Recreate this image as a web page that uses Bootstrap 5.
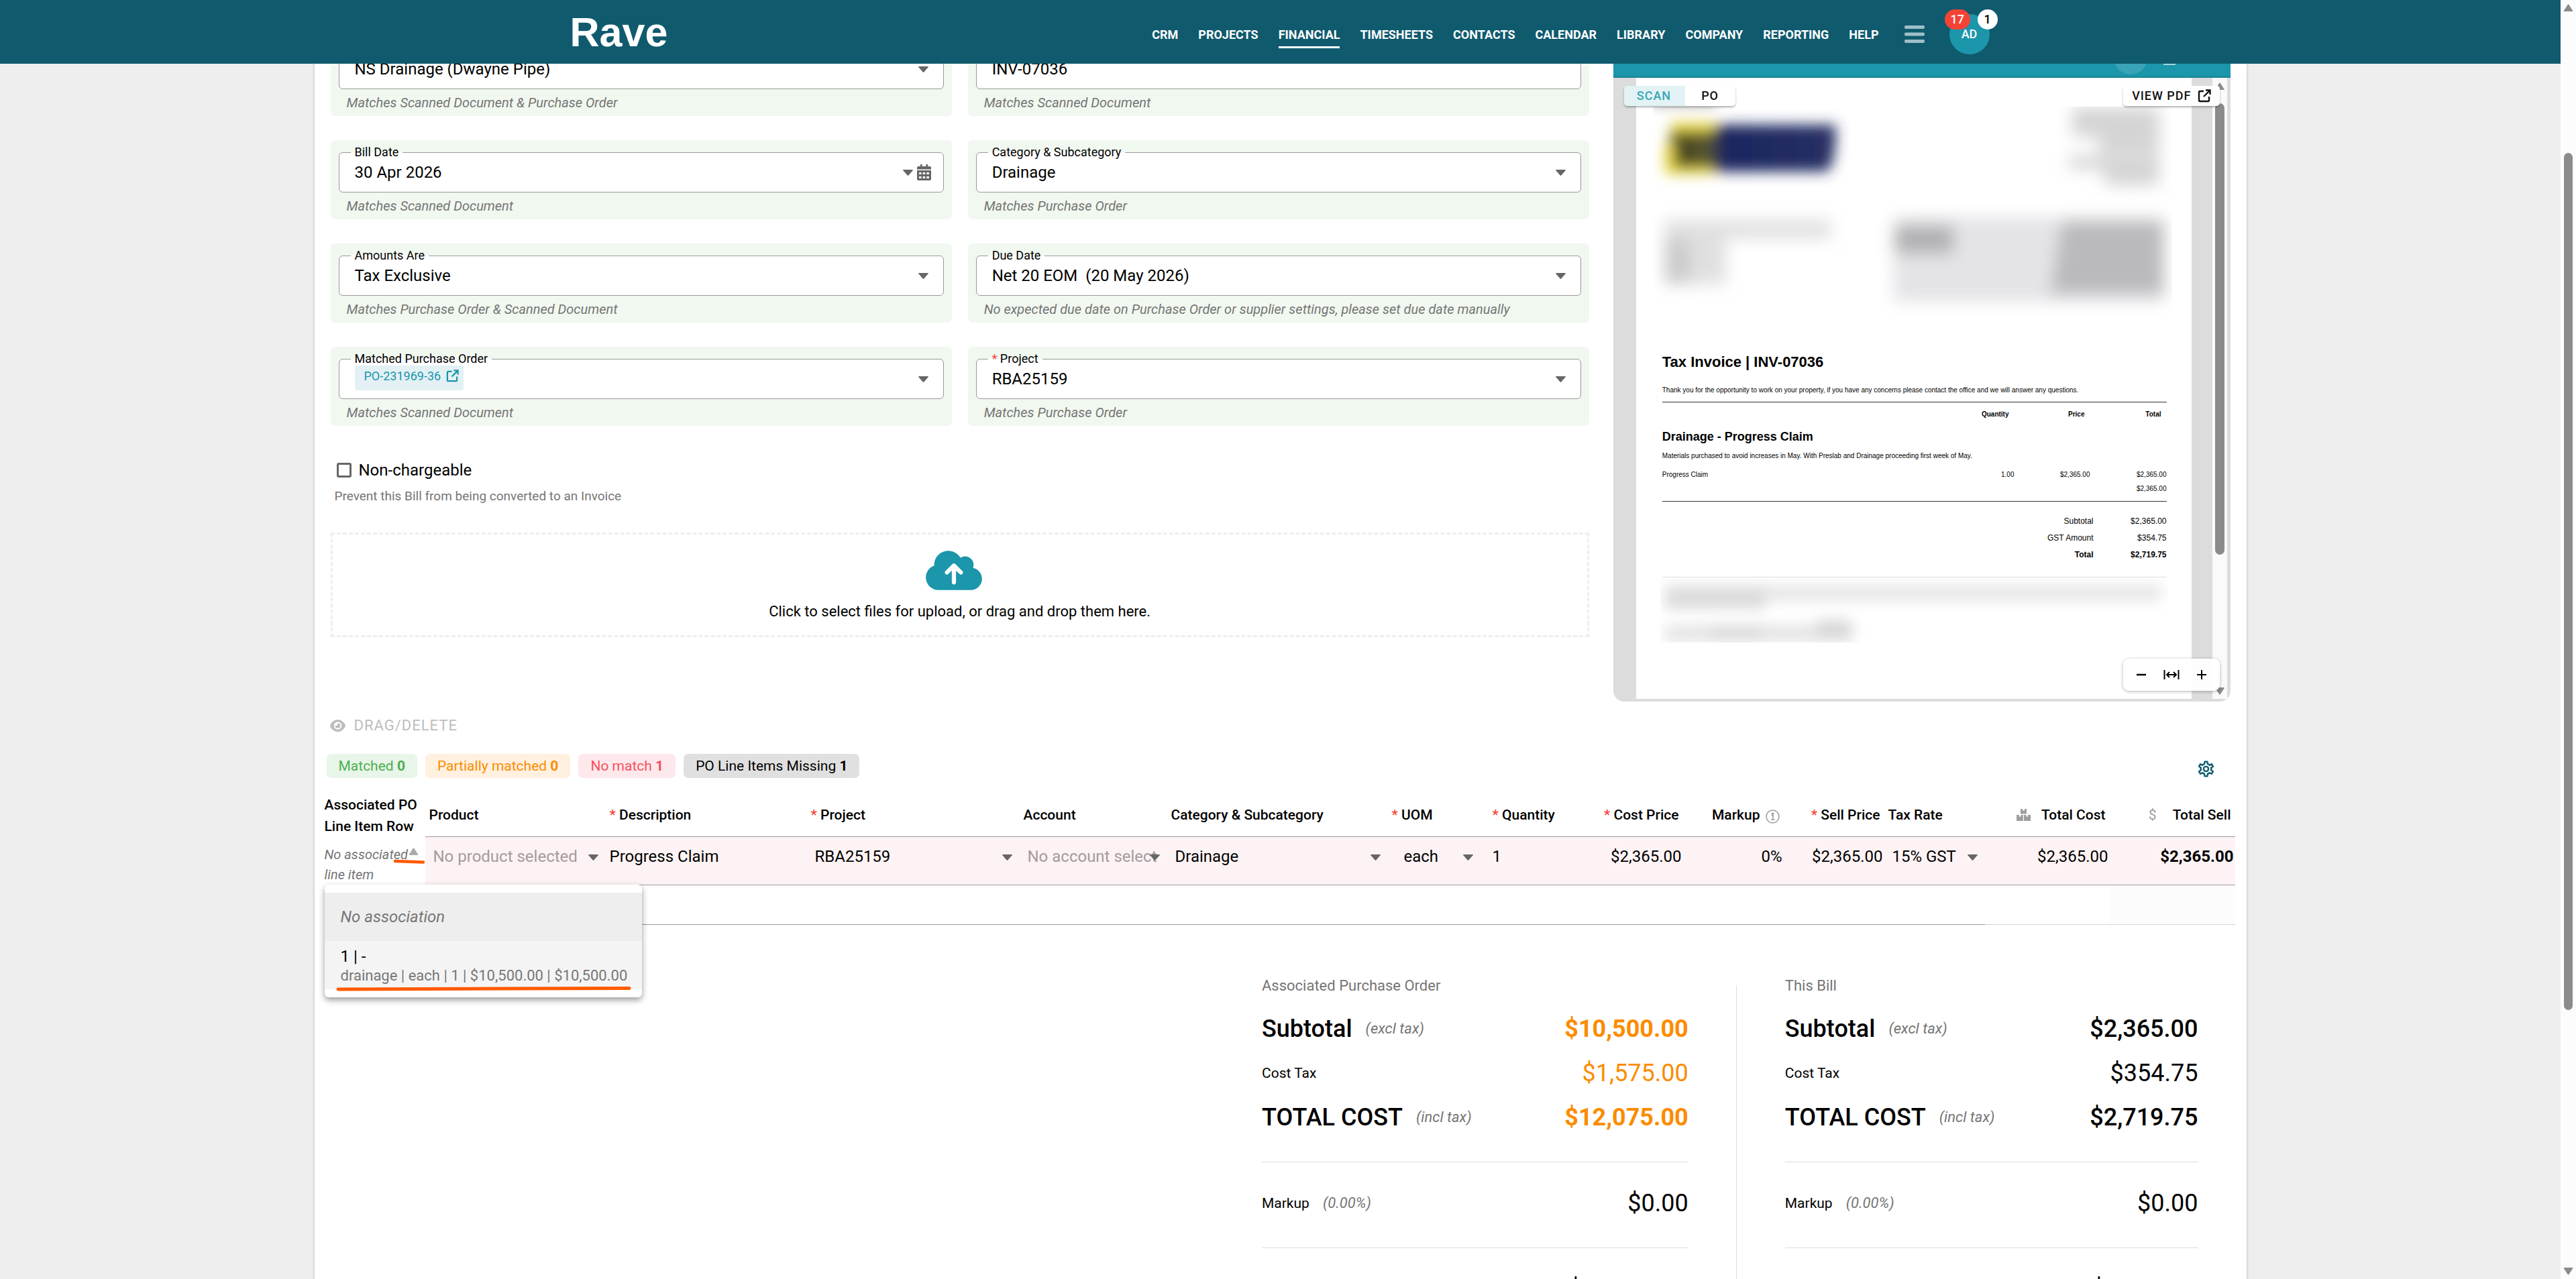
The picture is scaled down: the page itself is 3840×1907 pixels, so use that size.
<!DOCTYPE html>
<html lang="en">
<head>
<meta charset="utf-8">
<meta name="viewport" content="width=device-width, initial-scale=1">
<title>Rave - Bill INV-07036</title>
<link rel="stylesheet" href="https://cdn.jsdelivr.net/npm/bootstrap@5.3.0/dist/css/bootstrap.min.css">
<style>
:root{--nav:#105a6e;--teal:#1b96ab;--muted:#757575;--orange:#fb8c00;--line:#999}
body{font-family:Roboto,sans-serif;font-size:24px;line-height:32px;color:#000;background:#eee}
svg{display:block;flex:none}
button{color:inherit}

/* top bar */
.topbar{background:var(--nav);height:95px;z-index:10;position:relative}
.topbar-inner{max-width:2118px;width:100%;height:95px}
.brand{font-family:"Liberation Sans",sans-serif;font-weight:700;font-size:61px;line-height:64px;color:#fff;text-decoration:none}
.main-menu{gap:30px}
.main-menu a{color:#fff;font-size:18px;font-weight:700;line-height:24px;padding:16px 0 5px;text-decoration:none;border-bottom:3px solid transparent}
.main-menu a.active{border-color:#fff}
.burger{color:#a0bec7;border:0;background:none;padding:6px 0 0;margin:0 37px 0 38px}
.avatar{width:60px;height:60px;border-radius:50%;background:var(--teal);color:#fff;border:0;font-size:18px;font-weight:500;padding:0;position:relative;margin:6px 2px 0 0}
.count{position:absolute;top:-7px;height:30px;border-radius:15px;font-size:18px;line-height:30px;padding:0 9px;color:#fff;background:#f44336;left:-7px}
.count-plain{left:42px;background:#fff;color:#000;padding:0 10px}

/* page frame */
.shell{overflow:hidden}
.sheet{max-width:2880px;width:100%;background:#fff;margin:-40px auto 0;box-shadow:0 1px 4px rgba(0,0,0,.25)}
.form-area{padding:0 24px;gap:36px}
.form-left{flex:51 1 0;min-width:0}
.form-right{flex:25 1 0;min-width:0}
.field-grid{display:grid;grid-template-columns:1fr 1fr;gap:36px 24px}
.match-box{background:#f1f8f0;border-radius:6px;padding:18px 12px 0}
.outlined{position:relative;display:flex;align-items:center}
.outlined label{position:absolute;left:18px;top:-10px;padding:0 6px;font-size:18px;line-height:20px;background:linear-gradient(#f1f8f0 50%,#fff 50%)}
.outlined .ctl{width:100%;height:60px;border:1px solid #999;border-radius:6px;background:#fff;padding:0 60px 0 23px;font-size:24px;color:#000;appearance:none}
.outlined .caret{position:absolute;right:23px}
.outlined .date-tools{position:absolute;right:19px;gap:6px}
.hint{font-size:20px;line-height:40px;font-style:italic;color:var(--muted);padding-left:12px}
.req{color:#f44336}
.caret{width:15px;height:9px;color:#666;pointer-events:none}
.po-chip{position:absolute;left:24px;top:8px;height:39px;background:#e3f1f5;border-radius:4px;color:var(--teal);font-size:18px;line-height:36px;padding:0 7px 4px 14px;gap:8px;text-decoration:none}
.check-row{margin-top:50px;padding-left:9px;gap:11px}
.check-row input{width:22px;height:22px;appearance:none;border:3px solid #666;border-radius:3px;margin:0}
.plain-hint{font-size:19px;line-height:20px;color:var(--muted);margin:13px 0 44px 6px}
.drop{width:100%;border:3px dashed #eee;background:none;height:156px;padding:20px 0 0;font-size:22px;line-height:26px;color:#000}
.drop svg{margin:0 18px 15px 0;color:var(--teal)}

/* document viewer */
.viewer{border-radius:0 0 16px 16px;overflow:hidden;background:#dcdcdc;position:relative}
.viewer-head{height:61px;background:var(--teal);border-bottom:2px solid #178294;padding-right:82px;gap:24px}
.viewer-head i{width:50px;height:50px;border-radius:50%;background:#39a4b6;margin-top:6px}
.viewer-head b{width:18px;height:2px;background:#a5d5dd;margin-top:40px}
.viewer-body{padding:0 5px 4px 34px}
.paper{background:#fff;margin-right:31px;padding-bottom:83px;font-family:"Liberation Sans",sans-serif;color:#000}
.paper-in{padding:0 37px 0 39px}
.paper h2{font-size:22px;line-height:26px;font-weight:700;margin:0 0 21px}
.paper p{font-size:10px;line-height:16px;margin:0 0 9px}
.inv{width:100%;font-size:10px;line-height:14px;border-top:1px solid #333;border-bottom:1px solid #333}
.inv td,.inv th{text-align:right;padding:0;vertical-align:middle}
.inv .lft{text-align:left}
.inv thead th{height:37px;padding-right:8px}
.inv .ttl{font-size:18px;height:29px}
.inv .txt{font-size:10px;height:30px}
.inv .itm td{height:26px}
.inv .sub td{height:26px;padding-bottom:10px}
.sums{width:100%;font-size:12px;line-height:25px;margin:17px 0 20px}
.sums td,.sums th{text-align:right;padding:0;font-weight:400}
.sums .fin *{font-weight:700}
.faint{border-top:1px solid #ddd;margin:0 0 1px}
.track{width:22px;background:#fafafa;padding:7px 0 6px}
.track i{width:14px;height:673px;border-radius:7px;background:#8b8b8b;margin-top:20px}
.track svg,.page-track svg{color:#8b8b8b}
.float-bar{position:absolute;top:73px;height:30px;background:#fff;border-radius:5px;box-shadow:0 2px 3px rgba(0,0,0,.3);overflow:hidden}
.float-bar button,.float-bar a{border:0;background:#fff;height:30px;font-size:18px;line-height:30px;font-weight:500;letter-spacing:1px;color:#111;text-decoration:none;padding:0 25px}
.float-bar .on{background:#e3f3f5;color:#3aa5b6;border-right:1px solid #d5e5e7;padding:0 19px}
.float-bar a{gap:9px;padding:0 13px}
.float-left{left:16px}.float-right{right:16px}
.zoom-bar{position:absolute;right:16px;bottom:16px;width:144px;height:48px;background:rgba(255,255,255,.92);border-radius:9px;box-shadow:0 1px 5px rgba(0,0,0,.3);padding:0 19px}
.zoom-bar button{border:0;background:none;padding:0}

/* line items */
.lines-area{padding:20px 17px 0 15px}
.drag-btn{border:0;background:none;color:#bdbdbd;font-size:22px;line-height:32px;letter-spacing:1px;padding:0 8px;gap:13px}
.tags{gap:12px;padding-left:3px;margin:26px 0 24px;height:36px}
.tag{height:36px;line-height:36px;border-radius:7px;padding:0 18px;font-size:21px}
.tag-ok{background:#e8f5e9;color:#4caf50}.tag-part{background:#fff0df;color:#fb8c00}
.tag-no{background:#fde8eb;color:#f4515f}.tag-miss{background:#e0e0e0}
.gear{border:0;background:none;padding:0;color:var(--nav);margin-right:29px}
.grid-lines{table-layout:fixed;width:100%;border-collapse:separate;border-spacing:0}
.grid-lines th,.grid-lines td{padding:0}
.grid-lines th{font-size:21px;font-weight:500;line-height:32px;height:64px;vertical-align:middle;padding:0 6px;border-bottom:1px solid var(--line);white-space:nowrap}
.grid-lines th:first-child{padding:0;border:0;white-space:normal}
.grid-lines th .ico{color:#9e9e9e}
.grid-lines td{height:72px;vertical-align:top;background:#fef3f4;border-bottom:1px solid #a09999}
.grid-lines td:first-child{background:none;border:0;position:relative}
.grid-lines tr.blank td{height:59px;background:none;border-color:var(--line)}
.grid-lines tr.blank .soft{border-color:#d5d5d5}
.grid-lines tr.blank .soft:last-child{background:#fcfcfc}
.cell{display:flex;align-items:center;position:relative}
.cell .ctl{width:100%;height:58px;border:0;border-radius:0;background:none;font-size:24px;color:#000;padding:0 6px;appearance:none;text-overflow:clip}
.cell select.ctl{padding:0 40px 0 12px}
.cell .ctl.ghost{color:#a39c9c}
.cell select.ctl.tight{padding-right:13px}
.cell .ctl.num{text-align:right;padding:0 2px}
.cell .caret{position:absolute;right:11px;top:26px}
.uom{padding:0 12px}
.uom .caret{right:23px}
.assoc{border:0;background:none;width:100%;padding:11px 0 0;font-size:20px;line-height:30px;font-style:italic;color:var(--muted);text-align:left;position:relative}
.assoc .caret{position:absolute;right:10px;top:16px;height:11px;color:#aaa}
.pen{position:absolute;left:103px;top:33px}
.pick{position:absolute;left:0;top:71px;width:473px;background:#fff;border-radius:6px;padding:12px 0;box-shadow:0 4px 10px rgba(0,0,0,.4);z-index:5;white-space:nowrap}
.pick button{display:block;width:100%;height:72px;border:0;text-align:left;padding:0 24px;background:#f4f4f4}
.pick .none{background:#eee;color:#777;font-style:italic}
.pick small{display:block;font-size:22px;line-height:26px;color:#777}
.pick .pen{left:17px;top:151px}

/* totals */
.totals{width:49%;margin:76px 55px 0 auto}
.tot-a{flex:633 1 0}.tot-b{flex:613 1 0}
.tot-rule{width:1px;background:#ddd;margin:14px 72px 0 71px}
.totals h3{font-size:22px;line-height:30px;font-weight:400;color:var(--muted);margin:0 0 16px}
.sum-row{height:66px;font-size:21px}
.sum-row em{color:var(--muted);margin-left:20px;font-size:22px}
.sum-row .big{font-size:36px;font-weight:500}
.sum-row .amt{font-size:36px;margin-left:auto}
.or{color:var(--orange)}
.totals hr{margin:33px 0 28px;border:0;border-top:1px solid #ddd;opacity:1}

.page-track{width:23px;background:#fcfcfc;padding:6px 1px 6px 0}
.page-track i{width:13px;height:1278px;border-radius:7px;background:#8b8b8b;margin-top:211px}
.flip{rotate:180deg}
</style>
<script src="https://cdn.jsdelivr.net/npm/bootstrap@5.3.0/dist/js/bootstrap.bundle.min.js" defer></script>
</head>
<body class="d-flex vh-100 overflow-hidden">
<svg width="0" height="0" class="position-absolute" aria-hidden="true">
<symbol id="down" viewBox="0 0 15 9"><path d="M1 0h13q1.500 0 .6 1.300L8.300 8.400q-.8.900-1.600 0L.4 1.300Q-.500 0 1 0z" fill="currentColor"/></symbol>
<symbol id="up" viewBox="0 0 15 12"><path d="M1 12h13q1.500 0 .6-1.500L8.500 1q-1-1.400-2 0L.4 10.500Q-.500 12 1 12z" fill="currentColor"/></symbol>
<symbol id="ext" viewBox="0 0 20 20"><path d="M9 3H3.500Q2 3 2 4.500v12Q2 18 3.500 18h12q1.500 0 1.500-1.500V11M12 1.500h6.500V8M18 2 9 11" fill="none" stroke="currentColor" stroke-width="2.400"/></symbol>
</svg>

<div class="shell flex-fill">
<header class="topbar d-flex justify-content-center">
  <div class="topbar-inner d-flex align-items-center">
    <a class="brand me-auto" href="#">Rave</a>
    <nav class="main-menu d-flex align-items-center" aria-label="Main">
      <a href="#">CRM</a><a href="#">PROJECTS</a><a href="#" class="active">FINANCIAL</a><a href="#">TIMESHEETS</a><a href="#">CONTACTS</a><a href="#">CALENDAR</a><a href="#">LIBRARY</a><a href="#">COMPANY</a><a href="#">REPORTING</a><a href="#">HELP</a>
    </nav>
    <button class="burger" type="button" aria-label="More"><svg width="30" height="26" viewBox="0 0 30 26" fill="currentColor"><rect width="30" height="5" rx="2"/><rect y="10.500" width="30" height="5" rx="2"/><rect y="21" width="30" height="5" rx="2"/></svg></button>
    <button class="avatar" type="button">AD<span class="count">17</span><span class="count count-plain">1</span></button>
  </div>
</header>

<main class="sheet">
<section class="form-area d-flex">
  <div class="form-left">
    <div class="field-grid">
      <div class="match-box">
        <div class="outlined"><label for="supplier">Supplier</label><select id="supplier" class="ctl"><option>NS Drainage (Dwayne Pipe)</option></select><svg class="caret"><use href="#down"/></svg></div>
        <div class="hint">Matches Scanned Document &amp; Purchase Order</div>
      </div>
      <div class="match-box">
        <div class="outlined"><label for="ref">Reference</label><input id="ref" class="ctl" value="INV-07036"></div>
        <div class="hint">Matches Scanned Document</div>
      </div>
      <div class="match-box">
        <div class="outlined"><label for="billdate">Bill Date</label><input id="billdate" class="ctl" value="30 Apr 2026">
          <span class="date-tools d-flex align-items-center"><svg class="caret position-static"><use href="#down"/></svg><svg width="21" height="24" viewBox="0 0 21 24" fill="#666"><path d="M5 0h2.500v3h6V0H16v3h3q2 0 2 2v2.500H0V5q0-2 2-2h3zM0 9h21v13q0 2-2 2H2q-2 0-2-2z"/><path d="M3 12h3.500v3H3zm5.700 0h3.500v3H8.700zm5.700 0h3.500v3h-3.500zM3 18h3.500v3H3zm5.700 0h3.500v3H8.700zm5.700 0h3.500v3h-3.500z" fill="#fff"/></svg></span></div>
        <div class="hint">Matches Scanned Document</div>
      </div>
      <div class="match-box">
        <div class="outlined"><label for="cat">Category &amp; Subcategory</label><select id="cat" class="ctl"><option>Drainage</option></select><svg class="caret"><use href="#down"/></svg></div>
        <div class="hint">Matches Purchase Order</div>
      </div>
      <div class="match-box">
        <div class="outlined"><label for="amounts">Amounts Are</label><select id="amounts" class="ctl"><option>Tax Exclusive</option></select><svg class="caret"><use href="#down"/></svg></div>
        <div class="hint">Matches Purchase Order &amp; Scanned Document</div>
      </div>
      <div class="match-box">
        <div class="outlined"><label for="due">Due Date</label><select id="due" class="ctl"><option>Net 20 EOM &nbsp;(20 May 2026)</option></select><svg class="caret"><use href="#down"/></svg></div>
        <div class="hint">No expected due date on Purchase Order or supplier settings, please set due date manually</div>
      </div>
      <div class="match-box">
        <div class="outlined"><select id="po" class="ctl"><option></option></select>
          <a href="#" class="po-chip d-flex align-items-center">PO-231969-36<svg width="19" height="19"><use href="#ext"/></svg></a><label for="po">Matched Purchase Order</label><svg class="caret"><use href="#down"/></svg></div>
        <div class="hint">Matches Scanned Document</div>
      </div>
      <div class="match-box">
        <div class="outlined"><label for="project"><span class="req">*</span> Project</label><select id="project" class="ctl"><option>RBA25159</option></select><svg class="caret"><use href="#down"/></svg></div>
        <div class="hint">Matches Purchase Order</div>
      </div>
    </div>
    <div class="check-row d-flex align-items-center"><input type="checkbox" id="nonch"><label for="nonch">Non-chargeable</label></div>
    <div class="plain-hint">Prevent this Bill from being converted to an Invoice</div>
    <button type="button" class="drop d-flex flex-column align-items-center">
      <svg width="84" height="67" viewBox="0 0 640 512" fill="currentColor"><path d="M144 480C64.500 480 0 415.500 0 336c0-62.800 40.200-116.200 96.200-135.900c-.1-2.700-.2-5.400-.2-8.100c0-88.400 71.600-160 160-160c59.300 0 111 32.200 138.700 80.200C409.900 102 428.300 96 448 96c53 0 96 43 96 96c0 12.200-2.300 23.800-6.400 34.600C596 238.400 640 290.100 640 352c0 70.700-57.300 128-128 128H144zm79-217c-9.400 9.400-9.400 24.600 0 33.900s24.600 9.400 33.900 0l39-39V392c0 13.300 10.700 24 24 24s24-10.700 24-24V257.900l39 39c9.400 9.400 24.600 9.400 33.900 0s9.400-24.600 0-33.900l-80-80c-9.400-9.400-24.600-9.400-33.900 0l-80 80z"/></svg>
      <span>Click to select files for upload, or drag and drop them here.</span>
    </button>
  </div>

  <div class="form-right">
    <div class="viewer">
      <div class="viewer-head d-flex justify-content-end"><i></i><b></b></div>
      <div class="viewer-body d-flex">
        <div class="paper flex-fill">
          <svg width="100%" viewBox="0 0 828 411" aria-hidden="true">
            <defs><filter id="soft" x="-40%" y="-90%" width="180%" height="280%"><feGaussianBlur stdDeviation="12"/></filter><filter id="softlogo" x="-30%" y="-60%" width="160%" height="220%"><feGaussianBlur stdDeviation="10"/></filter><clipPath id="cut"><rect x="25" y="43" width="774" height="340"/></clipPath>
            <linearGradient id="logo"><stop offset="0" stop-color="#8a8238"/><stop offset=".1" stop-color="#45441f"/><stop offset=".24" stop-color="#5d5a30"/><stop offset=".34" stop-color="#1a2660"/><stop offset="1" stop-color="#273064"/></linearGradient></defs>
            <g clip-path="url(#cut)">
              <g filter="url(#softlogo)"><path d="M52 70H298Q298 132 284 140H44Z" fill="url(#logo)"/><path d="M52 66h64v14H52zM42 98h14v46H42zM50 134h64v10H50z" fill="#ead94a"/>
              <path d="M25 28h95v12H25z" fill="#999"/></g>
              <g filter="url(#soft)" fill="#d4d4d4"><path d="M650 44h130v44h-130zM690 88h90v25h-90zM646 116h134v20h-134zM698 134h82v26h-82z"/></g>
              <g filter="url(#soft)" fill="#e0e0e0"><path d="M42 212h248v28H42zM42 240h50v68H42zM92 240h42v68H92z"/><path d="M44 240h36v66H44z" fill="#cacaca"/></g>
              <g filter="url(#soft)"><path d="M384 208h404v126H384z" fill="#e4e4e7"/><path d="M386 220h88v42h-88z" fill="#b0b0b2"/><path d="M634 214h152v108H618z" fill="#bababc"/></g>
            </g>
          </svg>
          <div class="paper-in">
            <h2>Tax Invoice | INV-07036</h2>
            <p>Thank you for the opportunity to work on your property, if you have any concerns please contact the office and we will answer any questions.</p>
            <table class="inv">
              <colgroup><col><col style="width:110px"><col style="width:113px"><col style="width:114px"></colgroup>
              <thead><tr><th></th><th>Quantity</th><th>Price</th><th>Total</th></tr></thead>
              <tbody>
                <tr><th class="lft ttl" colspan="4">Drainage - Progress Claim</th></tr>
                <tr><td class="lft txt" colspan="4">Materials purchased to avoid increases in May. With Preslab and Drainage proceeding first week of May.</td></tr>
                <tr class="itm"><td class="lft">Progress Claim</td><td>1.00</td><td>$2,365.00</td><td>$2,365.00</td></tr>
                <tr class="sub"><td colspan="4">$2,365.00</td></tr>
              </tbody>
            </table>
            <table class="sums">
              <colgroup><col><col style="width:109px"></colgroup>
              <tbody><tr><th>Subtotal</th><td>$2,365.00</td></tr><tr><th>GST Amount</th><td>$354.75</td></tr><tr class="fin"><th>Total</th><td>$2,719.75</td></tr></tbody>
            </table>
            <div class="faint"></div>
            <svg width="100%" viewBox="0 0 752 97" overflow="visible" aria-hidden="true"><defs><clipPath id="cut2"><rect x="-3" y="0" width="758" height="96"/></clipPath></defs>
              <g clip-path="url(#cut2)"><g filter="url(#softlogo)"><path d="M4 10h740v24H4z" fill="#e6e6e6"/><path d="M4 14h150v32H4z" fill="#dcdcdc"/></g><g filter="url(#softlogo)"><path d="M4 70h280v24H4z" fill="#e4e4e4"/><path d="M70 72h80v18H70zM230 62h52v30h-52z" fill="#d8d8d8"/></g></g></svg>
          </div>
        </div>
        <div class="track d-flex flex-column align-items-center"><svg width="14" height="11"><use href="#up"/></svg><i></i><svg class="mt-auto flip" width="14" height="11"><use href="#up"/></svg></div>
      </div>
      <div class="float-bar float-left d-flex"><button type="button" class="on">SCAN</button><button type="button">PO</button></div>
      <div class="float-bar float-right"><a href="#" class="d-flex align-items-center">VIEW PDF<svg width="20" height="20"><use href="#ext"/></svg></a></div>
      <div class="zoom-bar d-flex align-items-center justify-content-between">
        <button type="button" aria-label="Zoom out"><svg width="16" height="16" viewBox="0 0 16 16"><path d="M1 8h14" stroke="#000" stroke-width="2.500"/></svg></button>
        <button type="button" aria-label="Fit width"><svg width="24" height="16" viewBox="0 0 24 16" fill="none" stroke="#000" stroke-width="2"><path d="M1.500 1v14M22.500 1v14M5 8h14M9 4 5 8l4 4M15 4l4 4-4 4"/></svg></button>
        <button type="button" aria-label="Zoom in"><svg width="16" height="16" viewBox="0 0 16 16"><path d="M1 8h14M8 1v14" stroke="#000" stroke-width="2"/></svg></button>
      </div>
    </div>
  </div>
</section>

<section class="lines-area">
  <button type="button" class="drag-btn d-flex align-items-center"><svg width="23" height="18" viewBox="0 0 23 18"><path d="M11.500 0C5.500 0 1.600 4.600.2 8.200q-.3.800 0 1.600C1.600 13.400 5.500 18 11.500 18s9.900-4.600 11.300-8.200q.3-.8 0-1.600C21.400 4.600 17.500 0 11.500 0z" fill="#bdbdbd"/><circle cx="11.500" cy="9" r="5.800" fill="#fff"/><path d="M11.500 5.200a3.800 3.800 0 1 1-3.800 3.800q2.800.4 3.800-1.600.5-1 0-2.200z" fill="#bdbdbd"/></svg>DRAG/DELETE</button>
  <div class="tags d-flex align-items-start">
    <span class="tag tag-ok">Matched <b>0</b></span><span class="tag tag-part">Partially matched <b>0</b></span><span class="tag tag-no">No match <b>1</b></span><span class="tag tag-miss">PO Line Items Missing <b>1</b></span>
    <button type="button" class="gear ms-auto mt-2" aria-label="Column settings"><svg width="29" height="29" viewBox="0 0 24 24" fill="currentColor"><path d="M12,8A4,4 0 0,1 16,12A4,4 0 0,1 12,16A4,4 0 0,1 8,12A4,4 0 0,1 12,8M12,10A2,2 0 0,0 10,12A2,2 0 0,0 12,14A2,2 0 0,0 14,12A2,2 0 0,0 12,10M10,22C9.750,22 9.540,21.820 9.500,21.580L9.130,18.930C8.500,18.680 7.960,18.340 7.440,17.940L4.950,18.950C4.730,19.030 4.460,18.950 4.340,18.730L2.340,15.270C2.210,15.050 2.270,14.780 2.460,14.630L4.570,12.970L4.500,12L4.570,11L2.460,9.370C2.270,9.220 2.210,8.950 2.340,8.730L4.340,5.270C4.460,5.050 4.730,4.960 4.950,5.050L7.440,6.050C7.960,5.660 8.500,5.320 9.130,5.070L9.500,2.420C9.540,2.180 9.750,2 10,2H14C14.250,2 14.460,2.180 14.500,2.420L14.870,5.070C15.500,5.320 16.040,5.660 16.560,6.050L19.050,5.050C19.270,4.960 19.540,5.050 19.660,5.270L21.660,8.730C21.790,8.950 21.730,9.220 21.540,9.370L19.430,11L19.500,12L19.430,13L21.540,14.630C21.730,14.780 21.790,15.050 21.660,15.270L19.660,18.730C19.540,18.950 19.270,19.040 19.050,18.950L16.560,17.950C16.040,18.340 15.500,18.680 14.870,18.930L14.500,21.580C14.460,21.820 14.250,22 14,22H10M11.250,4L10.880,6.610C9.680,6.860 8.620,7.500 7.850,8.390L5.440,7.350L4.690,8.650L6.800,10.200C6.400,11.370 6.400,12.640 6.800,13.800L4.680,15.360L5.430,16.660L7.860,15.620C8.630,16.500 9.680,17.140 10.870,17.380L11.240,20H12.760L13.130,17.390C14.320,17.140 15.370,16.500 16.140,15.620L18.570,16.660L19.320,15.360L17.200,13.810C17.600,12.640 17.600,11.370 17.200,10.200L19.310,8.650L18.560,7.350L16.150,8.390C15.380,7.500 14.320,6.860 13.120,6.620L12.750,4H11.250Z"/></svg></button>
  </div>

  <table class="grid-lines">
    <colgroup><col style="width:150px"><col style="width:269px"><col style="width:300px"><col style="width:317px"><col style="width:220px"><col style="width:329px"><col style="width:150px"><col style="width:140px"><col style="width:150px"><col style="width:150px"><col style="width:150px"><col style="width:150px"><col style="width:186px"><col style="width:187px"></colgroup>
    <thead><tr>
      <th>Associated PO Line Item Row</th><th>Product</th><th><span class="req">*</span> Description</th><th><span class="req">*</span> Project</th><th>Account</th><th>Category &amp; Subcategory</th><th><span class="req">*</span> UOM</th><th><span class="req">*</span> Quantity</th>
      <th class="text-end"><span class="req">*</span> Cost Price</th>
      <th><span class="d-flex justify-content-end align-items-center">Markup<svg class="ico ms-2 mt-1" width="21" height="21" viewBox="0 0 21 21"><circle cx="10.500" cy="10.500" r="9.500" fill="none" stroke="currentColor" stroke-width="1.600"/><path d="M8.500 9h2.500v5.500M8 15h5.500M9.700 5.500h1.800v1.800H9.700z" fill="none" stroke="currentColor" stroke-width="1.500"/></svg></span></th>
      <th class="text-end"><span class="req">*</span> Sell Price</th><th>Tax Rate</th>
      <th><span class="d-flex justify-content-end align-items-center"><svg class="ico me-3" width="21" height="18" viewBox="0 0 21 18" fill="currentColor"><path d="M6 0h3v3l1.500-.8L12 3V0h3v7.500H6zM0 9h4v3l1.300-.8L6.500 12V9h3.300v9H0zM11 9h3.500v3l1.300-.8L17 12V9h4v9H11z"/></svg>Total Cost</span></th>
      <th><span class="d-flex justify-content-end"><span class="ico fw-normal me-4">$</span>Total Sell</span></th>
    </tr></thead>
    <tbody>
      <tr>
        <td><button type="button" class="assoc" aria-expanded="true">No associated<br>line item<svg class="caret"><use href="#up"/></svg></button>
          <svg class="pen" width="46" height="7" viewBox="0 0 46 7"><path d="M2 3 44 4.500" stroke="#ff5a00" stroke-width="4.500" stroke-linecap="round"/></svg>
          <div class="pick" role="listbox">
            <button type="button" class="none" role="option">No association</button>
            <button type="button" role="option">1 | -<small>drainage | each | 1 | $10,500.00 | $10,500.00</small></button>
            <svg class="pen" width="440" height="8" viewBox="0 0 440 8"><path d="M3 5 437 3.500" stroke="#ff5a00" stroke-width="5" stroke-linecap="round"/></svg>
          </div></td>
        <td><div class="cell"><select class="ctl ghost" aria-label="Product"><option>No product selected</option></select><svg class="caret"><use href="#down"/></svg></div></td>
        <td><div class="cell"><input class="ctl" aria-label="Description" value="Progress Claim"></div></td>
        <td><div class="cell"><select class="ctl" aria-label="Project"><option>RBA25159</option></select><svg class="caret"><use href="#down"/></svg></div></td>
        <td><div class="cell"><select class="ctl ghost tight" aria-label="Account"><option>No account select</option></select><svg class="caret"><use href="#down"/></svg></div></td>
        <td><div class="cell"><select class="ctl" aria-label="Category"><option>Drainage</option></select><svg class="caret"><use href="#down"/></svg></div></td>
        <td><div class="cell uom"><select class="ctl" aria-label="UOM"><option>each</option></select><svg class="caret"><use href="#down"/></svg></div></td>
        <td><div class="cell"><input class="ctl" aria-label="Quantity" value="1"></div></td>
        <td><div class="cell"><input class="ctl num" aria-label="Cost price" value="$2,365.00"></div></td>
        <td><div class="cell"><input class="ctl num" aria-label="Markup" value="0%"></div></td>
        <td><div class="cell"><input class="ctl num" aria-label="Sell price" value="$2,365.00"></div></td>
        <td><div class="cell"><select class="ctl" aria-label="Tax rate"><option>15% GST</option></select><svg class="caret"><use href="#down"/></svg></div></td>
        <td><div class="cell"><input class="ctl num" aria-label="Total cost" value="$2,365.00"></div></td>
        <td><div class="cell"><input class="ctl num fw-bold" aria-label="Total sell" value="$2,365.00"></div></td>
      </tr>
      <tr class="blank"><td></td><td></td><td></td><td></td><td></td><td></td><td></td><td></td><td></td><td></td><td></td><td></td><td class="soft"></td><td class="soft"></td></tr>
    </tbody>
  </table>

  <div class="totals d-flex">
    <div class="tot-a">
      <h3>Associated Purchase Order</h3>
      <div class="sum-row d-flex align-items-center"><span class="big">Subtotal</span><em>(excl tax)</em><span class="amt or fw-bold">$10,500.00</span></div>
      <div class="sum-row d-flex align-items-center"><span>Cost Tax</span><span class="amt or">$1,575.00</span></div>
      <div class="sum-row d-flex align-items-center"><span class="big">TOTAL COST</span><em>(incl tax)</em><span class="amt or fw-bold">$12,075.00</span></div>
      <hr>
      <div class="sum-row d-flex align-items-center"><span>Markup</span><em>(0.00%)</em><span class="amt">$0.00</span></div>
      <hr>
      <div class="sum-row d-flex align-items-center"><span class="amt">$10,500.00</span></div>
    </div>
    <div class="tot-rule"></div>
    <div class="tot-b">
      <h3>This Bill</h3>
      <div class="sum-row d-flex align-items-center"><span class="big">Subtotal</span><em>(excl tax)</em><span class="amt big">$2,365.00</span></div>
      <div class="sum-row d-flex align-items-center"><span>Cost Tax</span><span class="amt">$354.75</span></div>
      <div class="sum-row d-flex align-items-center"><span class="big">TOTAL COST</span><em>(incl tax)</em><span class="amt big">$2,719.75</span></div>
      <hr>
      <div class="sum-row d-flex align-items-center"><span>Markup</span><em>(0.00%)</em><span class="amt">$0.00</span></div>
      <hr>
      <div class="sum-row d-flex align-items-center"><span class="amt">$2,365.00</span></div>
    </div>
  </div>
</section>
</main>
</div>

<div class="page-track d-flex flex-column align-items-center"><svg width="15" height="11"><use href="#up"/></svg><i></i><svg class="mt-auto flip" width="15" height="11"><use href="#up"/></svg></div>
</body>
</html>
